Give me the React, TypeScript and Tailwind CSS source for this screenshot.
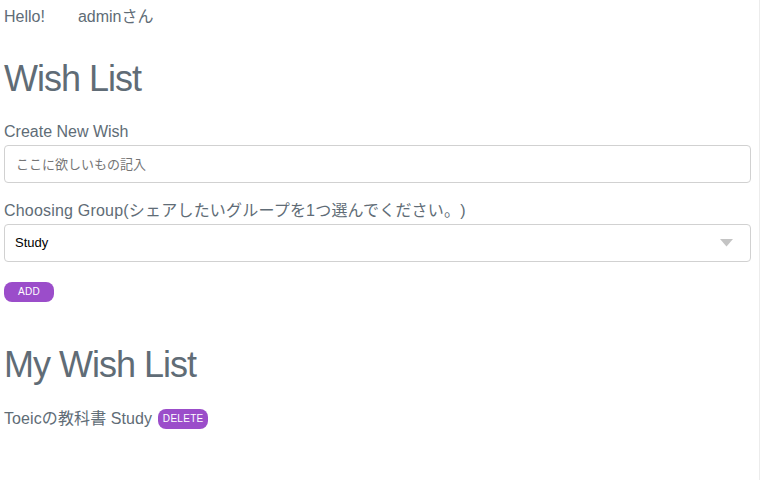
import React from 'react';

const font = { fontFamily: '"Liberation Sans", Arial, "Noto Sans CJK JP", sans-serif' };

export default function App() {
  return (
    <div
      className="min-h-screen w-[760px] border-r border-[#ececec] bg-white pl-[4px] pr-[8px] text-[16px] text-[#606c76] [text-spacing-trim:space-all]"
      style={font}
    >
      {/* header */}
      <div className="flex pt-[4px] leading-[26px]">
        <span>Hello!</span>
        <span className="ml-[33px]">adminさん</span>
      </div>

      <h2 className="mt-[26px] text-[36px] leading-[45px] tracking-[-1px]">Wish List</h2>

      {/* form */}
      <form className="flex flex-col" onSubmit={(e) => e.preventDefault()}>
        <label className="mt-[21px] mb-[3px] leading-[20px]">Create New Wish</label>
        <input
          type="text"
          placeholder="ここに欲しいもの記入"
          className="h-[38px] w-[747px] rounded-[4px] border border-[#d1d1d1] px-[11px] text-[13px] text-black outline-none placeholder:text-[#757575]"
        />

        <label className="mt-[18px] mb-[3px] leading-[20px] tracking-[0.2px]">
          Choosing Group(シェアしたいグループを1つ選んでください。)
        </label>
        <div className="relative w-[747px]">
          <select
            defaultValue="Study"
            className="h-[38px] w-full appearance-none rounded-[4px] border border-[#d1d1d1] bg-white px-[10px] text-[13px] text-black outline-none"
          >
            <option>Study</option>
            <option>Family</option>
            <option>Friends</option>
          </select>
          <svg
            className="pointer-events-none absolute right-[18px] top-[15px]"
            width="13"
            height="8"
            viewBox="0 0 13 8"
          >
            <polygon points="0,0 13,0 6.5,7.5" fill="#c4c4c4" />
          </svg>
        </div>

        <div className="mt-[20px]">
          <button
            type="submit"
            className="flex h-[20px] w-[50px] items-center justify-center rounded-[8px] bg-[#9b4dca] text-[10px] uppercase leading-none tracking-[0.3px] text-white"
          >
            ADD
          </button>
        </div>
      </form>

      <h2 className="mt-[40px] text-[36px] leading-[45px] tracking-[-1px]">My Wish List</h2>

      {/* list */}
      <ul className="mt-[19px]">
        <li className="flex items-center leading-[26px]">
          <span className="tracking-[0.1px]">Toeicの教科書 Study</span>
          <button
            type="button"
            className="ml-[6px] flex h-[20px] w-[50px] items-center justify-center rounded-[8px] bg-[#9b4dca] text-[10px] uppercase leading-none tracking-[0.3px] text-white"
          >
            DELETE
          </button>
        </li>
      </ul>
    </div>
  );
}
